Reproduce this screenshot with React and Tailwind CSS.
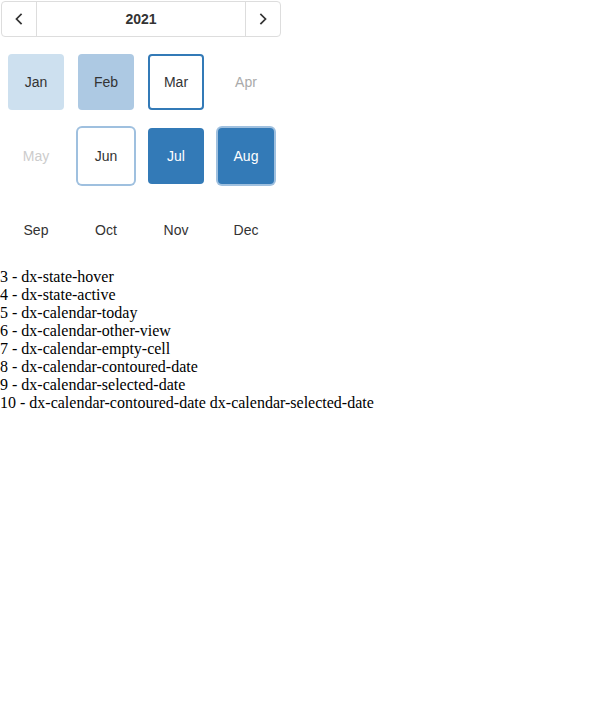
import React from 'react';

const months = [
  { label: 'Jan', kind: 'hover' },
  { label: 'Feb', kind: 'active' },
  { label: 'Mar', kind: 'today' },
  { label: 'Apr', kind: 'other' },
  { label: 'May', kind: 'empty' },
  { label: 'Jun', kind: 'contoured' },
  { label: 'Jul', kind: 'selected' },
  { label: 'Aug', kind: 'contouredSelected' },
  { label: 'Sep', kind: 'plain' },
  { label: 'Oct', kind: 'plain' },
  { label: 'Nov', kind: 'plain' },
  { label: 'Dec', kind: 'plain' },
];

const cellStyles = {
  hover: 'bg-[#cde0ef] text-[#333]',
  active: 'bg-[#adc9e3] text-[#333]',
  today: 'border-2 border-[#337ab7] text-[#333]',
  other: 'text-[#aaa]',
  empty: 'text-[#ccc]',
  contoured: 'text-[#333] shadow-[0_0_0_2px_#9fc0df]',
  selected: 'bg-[#337ab7] text-white',
  contouredSelected: 'bg-[#337ab7] text-white shadow-[0_0_0_2px_#9fc0df]',
  plain: 'text-[#333]',
};

const notes = [
  '3 - dx-state-hover',
  '4 - dx-state-active',
  '5 - dx-calendar-today',
  '6 - dx-calendar-other-view',
  '7 - dx-calendar-empty-cell',
  '8 - dx-calendar-contoured-date',
  '9 - dx-calendar-selected-date',
  '10 - dx-calendar-contoured-date dx-calendar-selected-date',
];

const Chevron = ({ dir }) => (
  <svg width="16" height="16" viewBox="0 0 16 16" fill="none" stroke="#333" strokeWidth="1.75" strokeLinecap="square">
    {dir === 'left' ? <path d="M10 3.5 L5.5 8 L10 12.5" /> : <path d="M6 3.5 L10.5 8 L6 12.5" />}
  </svg>
);

const App = () => {
  return (
    <div className="bg-white min-h-screen">
      <div className="pt-px pl-px w-[281px]" style={{ fontFamily: '"Liberation Sans", Arial, sans-serif' }}>
        {/* Navigator */}
        <div className="flex h-[36px] border border-[#ddd] rounded-[4px]">
          <button className="w-[35px] flex items-center justify-center border-r border-[#ddd]">
            <Chevron dir="left" />
          </button>
          <div className="flex-1 flex items-center justify-center text-[14px] font-bold text-[#333]">2021</div>
          <button className="w-[35px] flex items-center justify-center border-l border-[#ddd]">
            <Chevron dir="right" />
          </button>
        </div>

        {/* Months */}
        <div className="grid grid-cols-4 mt-[8px]">
          {months.map((m) => (
            <div key={m.label} className="h-[74px] flex items-center justify-center">
              <div
                className={`w-[56px] h-[56px] rounded-[4px] flex items-center justify-center text-[14px] ${cellStyles[m.kind]}`}
              >
                {m.label}
              </div>
            </div>
          ))}
        </div>
      </div>

      {/* Legend */}
      <div className="mt-px text-[16px] leading-[18px] text-black" style={{ fontFamily: '"Liberation Serif", "Times New Roman", serif' }}>
        {notes.map((n) => (
          <div key={n}>{n}</div>
        ))}
      </div>
    </div>
  );
};

export default App;
